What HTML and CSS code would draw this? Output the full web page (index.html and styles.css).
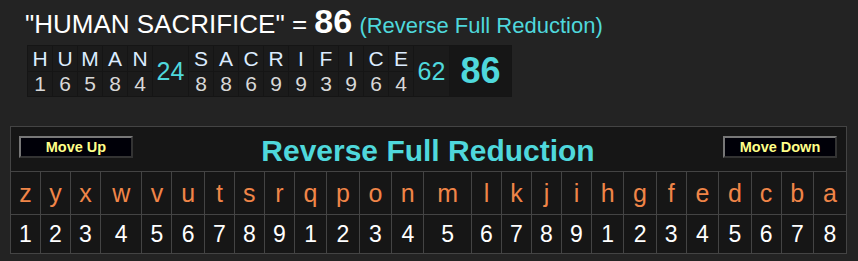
FILE: index.html
```html
<!DOCTYPE html>
<html>
<head>
<meta charset="utf-8">
<link rel="stylesheet" href="styles.css">
</head>
<body>
<div class="page">
  <div class="headline">"HUMAN SACRIFICE" = <b class="total">86</b> <span class="cipher">(Reverse Full Reduction)</span></div>
  <table class="breakdown">
    <tr>
      <td class="l">H</td><td class="l">U</td><td class="l">M</td><td class="l">A</td><td class="l">N</td>
      <td class="sum" rowspan="2">24</td>
      <td class="l">S</td><td class="l">A</td><td class="l">C</td><td class="l">R</td><td class="l">I</td><td class="l">F</td><td class="l">I</td><td class="l">C</td><td class="l">E</td>
      <td class="sum" rowspan="2">62</td>
      <td class="grand" rowspan="2">86</td>
    </tr>
    <tr>
      <td class="n">1</td><td class="n">6</td><td class="n">5</td><td class="n">8</td><td class="n">4</td>
      <td class="n">8</td><td class="n">8</td><td class="n">6</td><td class="n">9</td><td class="n">9</td><td class="n">3</td><td class="n">9</td><td class="n">6</td><td class="n">4</td>
    </tr>
  </table>
  <table class="chart">
    <tr>
      <td class="head" colspan="26">
        <div class="headrow">
          <button class="mv">Move Up</button>
          <span class="ctitle">Reverse Full Reduction</span>
          <button class="mv">Move Down</button>
        </div>
      </td>
    </tr>
    <tr class="letters">
      <td>z</td><td>y</td><td>x</td><td>w</td><td>v</td><td>u</td><td>t</td><td>s</td><td>r</td><td>q</td><td>p</td><td>o</td><td>n</td><td>m</td><td>l</td><td>k</td><td>j</td><td>i</td><td>h</td><td>g</td><td>f</td><td>e</td><td>d</td><td>c</td><td>b</td><td>a</td>
    </tr>
    <tr class="nums">
      <td>1</td><td>2</td><td>3</td><td>4</td><td>5</td><td>6</td><td>7</td><td>8</td><td>9</td><td>1</td><td>2</td><td>3</td><td>4</td><td>5</td><td>6</td><td>7</td><td>8</td><td>9</td><td>1</td><td>2</td><td>3</td><td>4</td><td>5</td><td>6</td><td>7</td><td>8</td>
    </tr>
  </table>
</div>
</body>
</html>
```
FILE: styles.css
```css
html, body {
  margin: 0;
  padding: 0;
  background: #232323;
  font-family: "Liberation Sans", Arial, sans-serif;
}
.page {
  padding: 4px 10px 0 10px;
}
.headline {
  padding-left: 15px;
  height: 36px;
  font-size: 26px;
  color: #ffffff;
  line-height: 34px;
  white-space: nowrap;
}
.total {
  font-size: 34px;
  font-weight: bold;
}
.cipher {
  font-size: 22px;
  color: #4fd8dc;
}
.breakdown {
  margin-left: 17px;
  margin-top: 5px;
  border-collapse: collapse;
  background: #1a1a1a;
}
.breakdown td {
  border: 1px solid #151515;
  padding: 0;
  text-align: center;
  background: #1b1b1b;
}
.breakdown .l {
  width: 24px;
  height: 25px;
  font-size: 21px;
  color: #dcecff;
  line-height: 25px;
}
.breakdown .n {
  width: 24px;
  height: 24px;
  font-size: 21px;
  color: #d8d8d8;
  line-height: 24px;
}
.breakdown .sum {
  width: 35px;
  font-size: 25px;
  color: #4fd8dc;
  background: #1b1b1b;
}
.breakdown .grand {
  width: 61px;
  font-size: 36px;
  font-weight: bold;
  color: #4fd8dc;
  background: #161616;
}
.chart {
  margin-top: 29px;
  width: 837px;
  border-collapse: collapse;
  background: #161616;
  border: 1px solid #444;
}
.chart td {
  border: 1px solid #444;
  padding: 0;
  text-align: center;
}
.chart .head {
  height: 44px;
  padding: 0 9px 0 8px;
}
.headrow {
  display: flex;
  justify-content: space-between;
  align-items: center;
  margin-top: -5px;
}
.mv {
  width: 114px;
  height: 22px;
  background: #000008;
  border: 2px solid;
  border-color: #777 #333 #333 #777;
  color: #ffff88;
  font-family: "Liberation Sans", Arial, sans-serif;
  font-weight: bold;
  font-size: 14.5px;
  padding: 0;
}
.ctitle {
  font-size: 30px;
  font-weight: bold;
  color: #4fd8dc;
  margin-top: 8px;
}
.letters td {
  height: 42px;
  font-size: 25px;
  color: #f08548;
}
.nums td {
  height: 38px;
  font-size: 23px;
  color: #ffffff;
}
```
